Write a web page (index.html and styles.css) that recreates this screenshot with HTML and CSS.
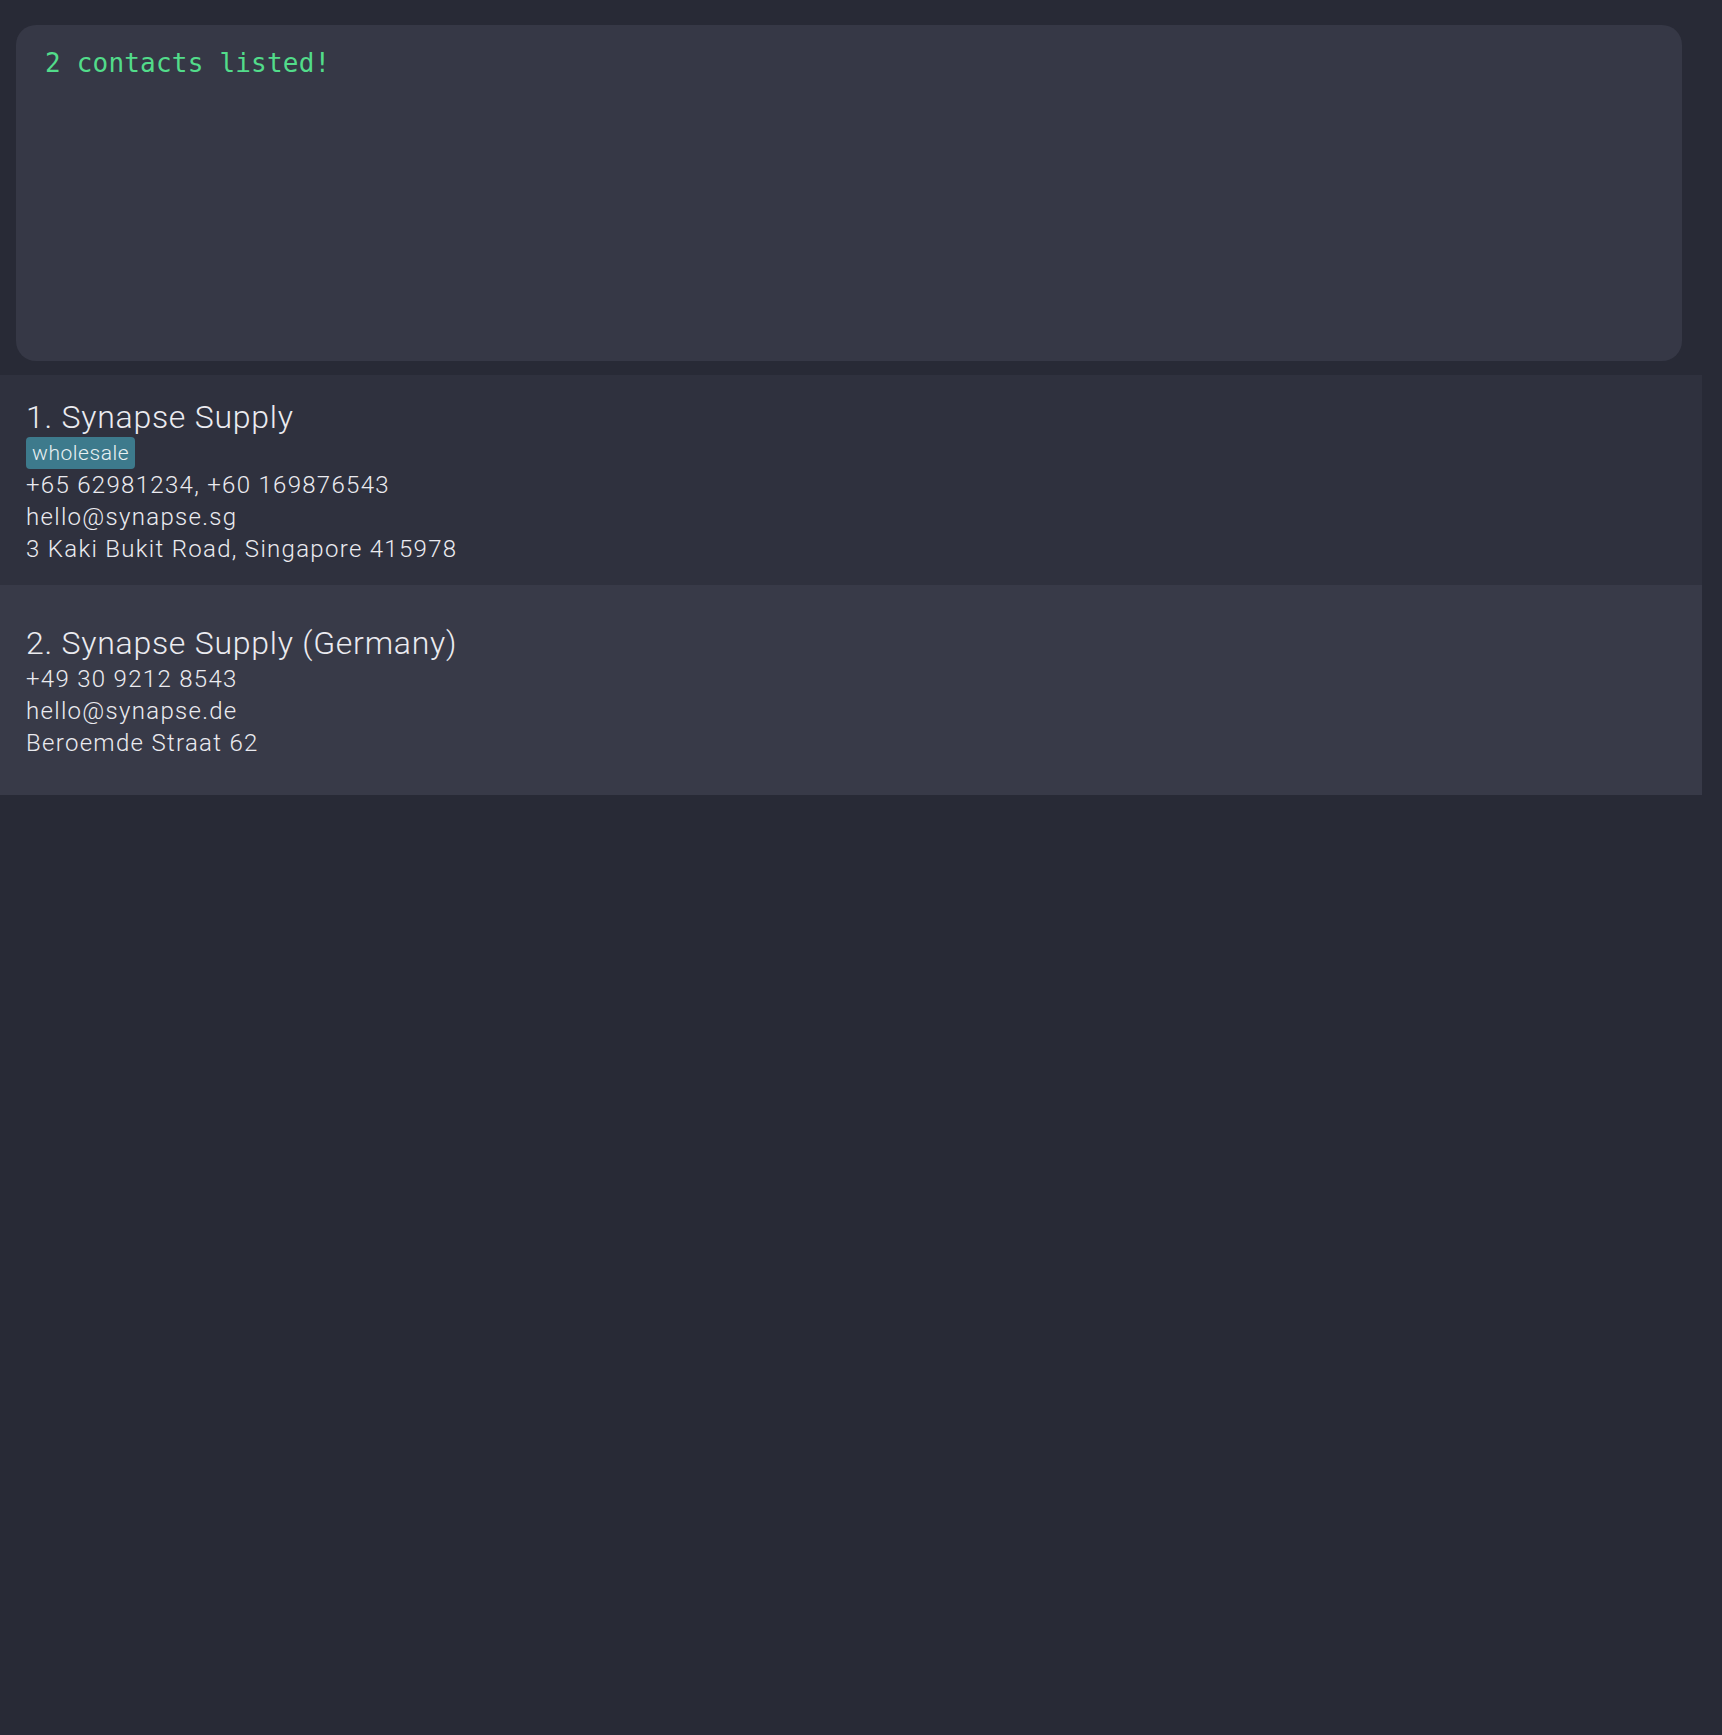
FILE: index.html
```html
<!DOCTYPE html>
<html lang="en">
<head>
<meta charset="utf-8">
<title>Contacts</title>
<link rel="stylesheet" href="styles.css">
</head>
<body>
<div class="app">
  <div class="result">
    <div class="result-text">2 contacts listed!</div>
  </div>
  <div class="list">
    <div class="card card-odd">
      <div class="name">1. Synapse Supply</div>
      <div class="tags"><span class="tag">wholesale</span></div>
      <div class="line">+65 62981234, +60 169876543</div>
      <div class="line">hello@synapse.sg</div>
      <div class="line">3 Kaki Bukit Road, Singapore 415978</div>
    </div>
    <div class="card card-even">
      <div class="name">2. Synapse Supply (Germany)</div>
      <div class="line">+49 30 9212 8543</div>
      <div class="line">hello@synapse.de</div>
      <div class="line">Beroemde Straat 62</div>
    </div>
  </div>
</div>
</body>
</html>
```
FILE: styles.css
```css
html, body {
  margin: 0;
  padding: 0;
  background: #282a36;
  height: 100%;
}
.app {
  padding-top: 25px;
  display: flex;
  flex-direction: column;
  gap: 14px;
}
.result {
  margin: 0 40px 0 16px;
  height: 336px;
  box-sizing: border-box;
  background: #363846;
  border-radius: 20px;
  padding: 23px 29px;
}
.result-text {
  font-family: "DejaVu Sans Mono", monospace;
  font-size: 26px;
  letter-spacing: 0.2px;
  color: #52dc8a;
}
.list {
  margin-right: 20px;
  display: flex;
  flex-direction: column;
}
.card {
  height: 210px;
  box-sizing: border-box;
  display: flex;
  flex-direction: column;
  justify-content: center;
  padding: 2px 0 0 26px;
  font-family: Roboto, "Liberation Sans", sans-serif;
  font-weight: 300;
  color: #ebebf0;
}
.card-odd { background: #2f313e; }
.card-even { background: #383a48; }
.name {
  font-size: 32px;
  line-height: 40px;
  letter-spacing: 0.75px;
}
.tags {
  display: flex;
  height: 32px;
}
.tag {
  background: #3d7a8c;
  border-radius: 4px;
  font-size: 21px;
  line-height: 32px;
  letter-spacing: 0.55px;
  padding: 0 6px;
  color: #e8f0f2;
}
.line {
  font-size: 24px;
  line-height: 32px;
  letter-spacing: 1.3px;
}
```
